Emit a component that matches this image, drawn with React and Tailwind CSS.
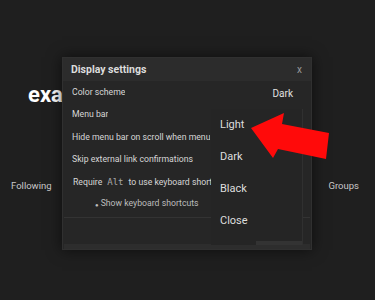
import React from "react";

const rows = [
  { label: "Color scheme", h: "h-[22px]", value: "Dark" },
  { label: "Menu bar", h: "h-[22px]" },
  { label: "Hide menu bar on scroll when menu", h: "h-[23px]" },
  { label: "Skip external link confirmations", h: "h-[22px]" },
];

const menuItems = ["Light", "Dark", "Black", "Close"];

const Arrow = () => (
  <svg
    className="absolute left-0 top-0 pointer-events-none"
    width="375"
    height="300"
    viewBox="0 0 375 300"
  >
    <polygon
      points="251,128 284,113 282,124 329,133 326,159 278,149 273,158"
      fill="#ff0a0a"
    />
  </svg>
);

export default function App() {
  return (
    <div
      className="relative w-[375px] h-[300px] overflow-hidden bg-[#1f1f1f] text-[#d6d6d6]"
      style={{ fontFamily: "Roboto, 'Liberation Sans', sans-serif" }}
    >
      {/* page behind the dialog */}
      <div className="pt-[82px] pl-[28px]">
        <h1 className="text-[22px] leading-[26px] font-bold text-white">example</h1>
      </div>
      <div className="mt-[71px] flex justify-between pl-[11px] pr-[16px] text-[9.5px] text-[#c8c8c8]">
        <span>Following</span>
        <span>Groups</span>
      </div>

      {/* Dialog */}
      <div className="absolute left-[62px] top-[57px] w-[250px] h-[193px] flex flex-col bg-[#262626] border border-[#303030] shadow-[0_0_14px_rgba(0,0,0,0.6)]">
        <div className="h-[23px] shrink-0 flex items-center justify-between bg-[#2c2c2c] pl-[8px] pr-[9px]">
          <span className="text-[10.5px] font-bold text-[#dcdcdc]">Display settings</span>
          <span className="text-[10px] text-[#9a9a9a]">x</span>
        </div>
        <div className="pt-[1px]">
          {rows.map((r) => (
            <div
              key={r.label}
              className={`${r.h} flex items-center justify-between pl-[9px] pr-[18px] text-[8.7px] whitespace-nowrap`}
            >
              <span className="max-w-[139px] overflow-hidden">{r.label}</span>
              {r.value && <span className="text-[10px] text-[#e0e0e0]">{r.value}</span>}
            </div>
          ))}
          <div className="h-[24px] flex items-center pl-[10px] text-[8.7px] whitespace-nowrap">
            <div className="w-[140px] overflow-hidden flex items-center">
              Require
              <code
                className="mx-[5px] text-[9px] text-[#a8a8a8]"
                style={{ fontFamily: "'DejaVu Sans Mono', 'Liberation Mono', monospace" }}
              >
                Alt
              </code>
              to use keyboard shortcuts
            </div>
          </div>
          <div className="h-[18px] flex items-center pl-[32px] text-[8.7px] text-[#bdbdbd]">
            <span className="mr-[2px] text-[6px]">●</span>Show keyboard shortcuts
          </div>
        </div>
        <div className="mt-[4px] flex-1 border-t border-[#333] mx-[1px]">
          <div className="h-full border-b-[5px] border-[#2d2d2d]" />
        </div>
      </div>

      {/* Dropdown */}
      <div className="absolute left-[211px] top-[109px] w-[92px] h-[136px] bg-[#252525] border-r border-[#303030] flex flex-col">
        {menuItems.map((m) => (
          <div key={m} className="h-[32px] flex items-center pl-[9px] text-[11px] text-[#dedede]">
            {m}
          </div>
        ))}
        <div className="flex-1 flex justify-end">
          <div className="w-[46px] h-[4px] mt-auto bg-[#333]" />
        </div>
      </div>

      <Arrow />
    </div>
  );
}
